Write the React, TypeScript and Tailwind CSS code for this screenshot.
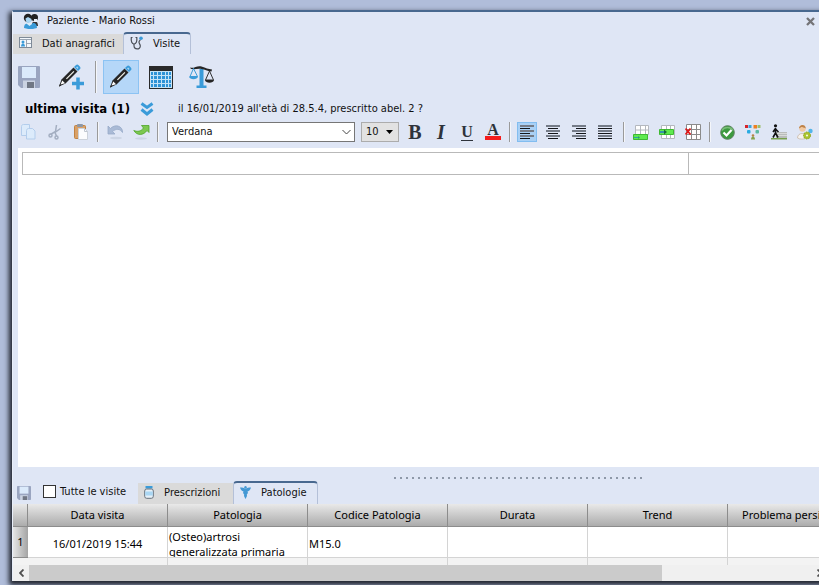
import { ReactNode } from 'react';

const columns = ['Data visita', 'Patologia', 'Codice Patologia', 'Durata', 'Trend', 'Problema persistente'];

const rows = [
  { id: 1, cells: ['16/01/2019 15:44', '(Osteo)artrosi generalizzata primaria', 'M15.0', '', '', ''] },
];

/* ---------- Icons ---------- */

function PatientsIcon() {
  return (
    <svg width="16" height="16" viewBox="0 0 16 16">
      <circle cx="11.5" cy="4.5" r="3.5" fill="#222" />
      <path d="M9 10c4-3 6-1 6 3h-5z" fill="#333" />
      <path d="M11 6h3v3h-3z" fill="#e8eef7" />
      <circle cx="5" cy="5" r="4.2" fill="#222" />
      <path d="M2.5 5.5 5 4l3.5 2-.5 3-3 1-2-1.5z" fill="#a9d6f3" />
      <path d="M1 15c0-4 2-5 4-4l2 1 3-2c3 0 4 2 4 5-4 1.5-9 1.5-13 0z" fill="#3a9bd9" />
      <path d="m4 11 2.5 2L9 11v-1H4z" fill="#dcecf8" />
    </svg>
  );
}

function CardIcon() {
  return (
    <svg width="13" height="12" viewBox="0 0 13 12">
      <rect x=".5" y=".5" width="12" height="10" fill="#f4f8fc" stroke="#7e8a98" />
      <path d="M1 2.5h11M7.5 3v7M8 6.5h4" stroke="#9aa5b2" />
      <circle cx="4" cy="5" r="1.5" fill="#3a9bd9" />
      <path d="M2 9.5c0-4 4-4 4 0z" fill="#3a9bd9" />
    </svg>
  );
}

function StethoscopeIcon() {
  return (
    <svg width="13" height="14" viewBox="0 0 13 14" fill="none">
      <path d="M2.5 1.5H1.3C.8 5.500 2 8 4 8s3.300-2.500 2.800-6.500H5.500" stroke="#4a4f58" strokeWidth="1.2" />
      <path d="M4 8v1.500c0 4.500 6.300 4.500 6.300.5 0-2-1.800-2.500-1.200-4.500L10.500 3.500" stroke="#4a4f58" strokeWidth="1.2" />
      <circle cx="11" cy="2.200" r="1.800" fill="#3a9bd9" />
    </svg>
  );
}

function FloppyIcon({ size }: { size: number }) {
  return (
    <svg width={size} height={size} viewBox="0 0 22 22">
      <path d="M1 0h20a1 1 0 0 1 1 1v20a1 1 0 0 1-1 1H3l-3-3V1a1 1 0 0 1 1-1z" fill="#9aa5c0" />
      <rect x="4" y="1" width="14" height="11" fill="#dbeafb" />
      <rect x="5" y="14.5" width="12" height="7.5" fill="#cbd3e2" />
      <rect x="9" y="16" width="7" height="6" fill="#707784" />
    </svg>
  );
}

function PencilShape() {
  return (
    <>
      <path d="M3.500 15.500 15.500 3.500l4 4-12 12L1 22.500z" fill="#262626" />
      <path d="m2.500 20.500 1.800-4 2.800 2.700z" fill="#fff" />
      <path d="m1 22.500.8-2.200 1.400 1.400z" fill="#262626" />
      <path d="M8 14.500 15.500 7l.8.8-7.500 7.500z" fill="#f6f6ee" />
      <path d="m16 3 1.800-1.800c.9-.9 2-.9 2.800 0l1.200 1.200c.9.900.9 2 0 2.800L20 7z" fill="#3a9bd9" />
      <path d="m18 3.200 1.200-.7 1.200 1.200-.8 1.200z" fill="#a9d6f3" />
    </>
  );
}

function PencilIcon() {
  return (
    <svg width="24" height="24" viewBox="0 0 24 24">
      <PencilShape />
    </svg>
  );
}

function PencilPlusIcon() {
  return (
    <svg width="26" height="26" viewBox="0 0 26 26">
      <PencilShape />
      <path d="M20 13.500v12M14 19.500h12" stroke="#3a9bd9" strokeWidth="3.5" />
    </svg>
  );
}

function CalendarIcon() {
  return (
    <svg width="24" height="23" viewBox="0 0 24 23">
      <path d="M0 0h24v23H0z" fill="#2a2a2a" />
      <path d="M1 5h22v17H1z" fill="#c5e3f7" />
      <path
        d="M2 6h2v3H2zm3 0h3v3H5zm4 0h3v3H9zm4 0h3v3h-3zm4 0h2v3h-2zm3 0h2v3h-2zM2 10h2v3H2zm3 0h3v3H5zm4 0h3v3H9zm4 0h3v3h-3zm4 0h2v3h-2zm3 0h2v3h-2zM2 14h2v3H2zm3 0h3v3H5zm4 0h3v3H9zm4 0h3v3h-3zm4 0h2v3h-2zm3 0h2v3h-2zM2 18h2v3H2zm3 0h3v3H5zm4 0h3v3H9zm4 0h3v3h-3zm4 0h2v3h-2zm3 0h2v3h-2z"
        fill="#2f93d6"
      />
    </svg>
  );
}

function ScalesIcon() {
  return (
    <svg width="25" height="24" viewBox="0 0 25 24" fill="none">
      <path d="M10.500 4h4v16.500h3V23h-10v-2.500h3z" fill="#3a9bd9" />
      <path d="M1 2.500C5 4 8 0 12.500 1.500S19 4 23 4.500l-.5 2C18 6 16 4.500 12.500 4S6 4.500 2 4z" fill="#262626" />
      <path d="M4.500 3.500 1 11.500h7.500z" stroke="#3a9bd9" />
      <path d="M0 11.500h9c-.5 3.500-8.500 3.500-9 0z" fill="#3a9bd9" />
      <path d="M20.500 6 16.500 15h8z" stroke="#333" />
      <path d="M16 15h9c-.5 3.500-8.500 3.500-9 0z" fill="#262626" />
    </svg>
  );
}

function DoubleChevronIcon() {
  return (
    <svg width="14" height="14" viewBox="0 0 14 14" fill="none" stroke="#3a9bd9" strokeWidth="3">
      <path d="m1.500 1.500 5.500 4 5.500-4M1.500 7.500l5.500 4.500 5.500-4.500" />
    </svg>
  );
}

function CopyIcon() {
  return (
    <svg width="16" height="16" viewBox="0 0 16 16" fill="#dcebfb" stroke="#b3cdec">
      <path d="M.5 2.500c0-1 .5-2 2-2h6v11h-8z" />
      <path d="M5.500 6.500c0-1 1-2 2-2h4l2.500 2.500v8h-8.500z" />
    </svg>
  );
}

function CutIcon() {
  return (
    <svg width="14" height="16" viewBox="0 0 14 16" fill="none" stroke="#a3aec1" strokeWidth="1.5">
      <path d="m8.500 1-1 6.500-5 3M12.500 4.500 7 8.500l1.500 3.500" />
      <circle cx="2.500" cy="11.500" r="1.500" />
      <circle cx="8.500" cy="13.500" r="1.500" />
    </svg>
  );
}

function PasteIcon() {
  return (
    <svg width="14" height="16" viewBox="0 0 14 16">
      <rect x=".5" y="1.500" width="11" height="13" rx="1" fill="#d9a066" stroke="#c08242" />
      <rect x="3" y="0" width="6" height="3" rx="1" fill="#8d97a6" />
      <path d="M4.500 4.500h6l3 3v8h-9z" fill="#fbfcfe" stroke="#ccd2db" />
      <path d="M10.500 4.500v3h3" fill="none" stroke="#bfc6d0" />
    </svg>
  );
}

function UndoIcon() {
  return (
    <svg width="17" height="16" viewBox="0 0 17 16">
      <ellipse cx="9" cy="14" rx="6" ry="1.300" fill="#ccd5e5" />
      <path d="M1 2v8h7L5.500 7.500C9 4.500 13 4.500 15.500 8.500 16 2 8-.5 3.500 4.500z" fill="#a9bad6" stroke="#97a9c8" strokeWidth=".8" />
    </svg>
  );
}

function RedoIcon() {
  return (
    <svg width="17" height="16" viewBox="0 0 17 16">
      <ellipse cx="8" cy="14.500" rx="6" ry="1.200" fill="#ccd5e5" />
      <path d="M8.500 1.500H16v7l-2-2C10.500 11.500 4 12 .8 6.500 4.500 8 8 7.500 10.500 4z" fill="#7cc850" stroke="#4fa52b" strokeWidth=".8" />
    </svg>
  );
}

function AlignIcon({ kind }: { kind: 'left' | 'center' | 'right' | 'justify' }) {
  const shortX = { left: 0, center: 2, right: 4, justify: 0 }[kind];
  const shortW = kind === 'justify' ? 14 : 10;
  return (
    <svg width="14" height="14" viewBox="0 0 14 14" shapeRendering="crispEdges">
      {[0, 5, 10].map((y) => (
        <rect key={y} x="0" y={y} width="14" height="2" fill="#757c88" />
      ))}
      {[3, 8, 13].map((y) => (
        <rect key={y} x={shortX} y={y} width={shortW} height="1" fill="#14161a" />
      ))}
    </svg>
  );
}

function InsertRowIcon() {
  return (
    <svg width="16" height="15" viewBox="0 0 16 15">
      <path d="M2.500.5h13v9h-13zM2.500 5h13M7.500.5v9M12.500.5v9" fill="#fff" stroke="#b4b8be" />
      <path d="M.5 9.500h14v5H.5z" fill="#5fea4f" stroke="#3eb932" />
      <path d="M1 12.500h5" stroke="#2f9cae" />
      <path d="m5 11 2 1.500L5 14" fill="#2f9c6e" />
    </svg>
  );
}

function InsertBeforeIcon() {
  return (
    <svg width="16" height="14" viewBox="0 0 16 14">
      <path d="M2.500.5h13v13h-13zM7.500.5v13M11.500.5v13" fill="#fff" stroke="#b4b8be" />
      <path d="M.5 4.500h14v5H.5z" fill="#5fea4f" stroke="#3eb932" />
      <path d="M1 7h5" stroke="#2674c8" strokeWidth="1.5" />
      <path d="M5 4.500 8 7 5 9.500" fill="#176a3a" />
    </svg>
  );
}

function DeleteTableIcon() {
  return (
    <svg width="16" height="16" viewBox="0 0 16 16">
      <path d="M1.500.5h14v15h-14zM1 5.500h14M1 10.500h14M6.500.5v15M11.500.5v15" fill="#fff" stroke="#8b8b8b" />
      <path d="m.5 4.500 5 6M5.500 4.500l-5 6" stroke="#e01818" strokeWidth="1.8" />
    </svg>
  );
}

function CheckIcon() {
  return (
    <svg width="15" height="15" viewBox="0 0 15 15">
      <circle cx="7.500" cy="7.500" r="6.800" fill="#3c9a3f" stroke="#5d8060" />
      <path d="M2 5.500C4 1.500 11 1.500 13 5.500" fill="none" stroke="#79bd78" strokeWidth="1.5" />
      <path d="m3.500 7.500 3 3 5-5.500" fill="none" stroke="#fff" strokeWidth="2.2" />
    </svg>
  );
}

function TreeIcon() {
  return (
    <svg width="16" height="16" viewBox="0 0 16 16">
      <path d="M0 1h3v3H0z" fill="#d8232a" />
      <path d="M3.500 1h3v3h-3z" fill="#3aa7de" />
      <path d="M8.500 1h3.500v3.500H8.500z" fill="#ef8022" />
      <path d="M12.500 1h3v3h-3z" fill="#9dbf6b" />
      <rect x="2" y="6" width="3.500" height="3.500" rx="1" fill="#29abe2" />
      <rect x="10.500" y="6" width="3.500" height="3.500" rx="1" fill="#5bb9a0" />
      <circle cx="8" cy="11.500" r="1.300" fill="#b78245" />
      <path d="M6 15.500c0-4 4-4 4 0z" fill="#86a34a" />
    </svg>
  );
}

function WalkIcon() {
  return (
    <svg width="16" height="16" viewBox="0 0 16 16">
      <path d="M5 8h11v6H5z" fill="#b9bcbb" />
      <path d="M5 9.500h11M5 11.500h11" stroke="#d9dad9" />
      <path d="M0 14h16v1.500H0z" fill="#76a04c" />
      <circle cx="4.500" cy="1.800" r="1.600" fill="#111" />
      <path d="M4.500 4v5L2 13.500M4.500 9 7 13.500M4.500 4.500 2 8M4.500 5 7.500 8" stroke="#111" strokeWidth="1.6" fill="none" />
    </svg>
  );
}

function UserGearIcon() {
  return (
    <svg width="16" height="16" viewBox="0 0 16 16">
      <path d="M.5 14c0-6 9-6 9 0-2 1.500-7 1.500-9 0z" fill="#f5f2ee" stroke="#c9b9a8" strokeWidth=".8" />
      <circle cx="5.500" cy="4.500" r="3.200" fill="#f1c9a1" />
      <path d="M2 4.500C2 0 8.500-.5 8.800 4.500 7 3.500 5 3 4.500 3z" fill="#bd824a" />
      <circle cx="13.500" cy="7" r="2.200" fill="#53b5ea" />
      <circle cx="10" cy="11.500" r="3.500" fill="#a9c22d" stroke="#8da41f" strokeDasharray="1.500 1" />
      <circle cx="10" cy="11.500" r="1.100" fill="#f4f7dc" />
    </svg>
  );
}

function BottleIcon() {
  return (
    <svg width="10" height="13" viewBox="0 0 10 13">
      <rect x="1.500" y="0" width="7" height="2.500" fill="#3a9bd9" />
      <rect x=".7" y="3" width="8.600" height="9.300" rx="2" fill="#e6f0f8" stroke="#66717d" />
      <path d="M1.200 5.500h7.600v4H1.200z" fill="#a9d6f3" />
    </svg>
  );
}

function CaduceusIcon() {
  return (
    <svg width="11" height="13" viewBox="0 0 11 13">
      <path d="M0 1.500c2.500 0 4 .5 5.500 1C7 2 8.500 1.500 11 1.500 10.500 4 9 5 7.500 5.500l.5 1.500L6.800 8.500l.2 1.500-1.500 3L4 10l.2-1.500L3 7l.5-1.500C2 5 .5 4 0 1.500z" fill="#4398d4" />
      <circle cx="5.500" cy="1.200" r="1.200" fill="#4398d4" />
    </svg>
  );
}

/* ---------- Building blocks ---------- */

function Separator() {
  return <span className="h-5 w-0.5 shrink-0 border-l border-[#9a9a9a] bg-[#f4f6fa]" />;
}

function Tab({ label, icon, active }: { label: string; icon: ReactNode; active?: boolean }) {
  return (
    <button
      role="tab"
      aria-selected={!!active}
      className={
        active
          ? 'flex h-full items-center gap-2.5 rounded-t-sm border border-t-2 border-b-0 border-[#b4c0d8] border-t-[#48688f] bg-[#dfe6f5] pl-1.5 pr-2.5 whitespace-nowrap'
          : 'mt-0.5 flex flex-1 items-center gap-2.5 bg-[#dadada] pl-1.5 whitespace-nowrap'
      }
    >
      <span className="-mt-0.5">{icon}</span>
      {label}
    </button>
  );
}

function ToolButton({ label, active, children }: { label: string; active?: boolean; children: ReactNode }) {
  return (
    <button
      aria-label={label}
      className={
        active
          ? 'flex h-5 w-5 shrink-0 items-center justify-center border border-[#82bdf0] bg-[#a9d0f5]'
          : 'flex h-5 w-5 shrink-0 items-center justify-center'
      }
    >
      {children}
    </button>
  );
}

/* ---------- Sections ---------- */

function FormatToolbar() {
  return (
    <div className="flex h-[30px] shrink-0 items-center pb-0.5 pl-1.5">
      <div className="flex gap-1.5">
        <ToolButton label="Copia"><CopyIcon /></ToolButton>
        <ToolButton label="Taglia"><CutIcon /></ToolButton>
        <ToolButton label="Incolla"><PasteIcon /></ToolButton>
      </div>
      <div className="ml-1.5 flex items-center gap-1.5">
        <Separator />
        <ToolButton label="Annulla"><UndoIcon /></ToolButton>
        <ToolButton label="Ripeti"><RedoIcon /></ToolButton>
        <Separator />
      </div>
      <div className="relative ml-2 w-[188px] shrink-0">
        <select aria-label="Carattere" className="block h-5 w-full appearance-none border border-[#767676] bg-white px-1 leading-4">
          <option>Verdana</option>
        </select>
        <svg className="pointer-events-none absolute right-1 top-1.5" width="9" height="8" viewBox="0 0 9 8" fill="none" stroke="#444">
          <path d="m.5 2 4 4 4-4" />
        </svg>
      </div>
      <div className="relative ml-1.5 w-[38px] shrink-0">
        <select aria-label="Dimensione" className="block h-5 w-full appearance-none border border-[#acacac] bg-[#e2e2e2] px-1 leading-4">
          <option>10</option>
        </select>
        <svg className="pointer-events-none absolute right-1.5 top-2" width="7" height="4" viewBox="0 0 7 4">
          <path d="M0 0h7L3.500 4z" fill="#000" />
        </svg>
      </div>
      <div className="ml-1.5 flex gap-1.5 font-['Liberation_Serif',serif] text-xl leading-5 text-[#2e333b]">
        <ToolButton label="Grassetto"><b>B</b></ToolButton>
        <ToolButton label="Corsivo"><b className="italic">I</b></ToolButton>
        <ToolButton label="Sottolineato">
          <b className="border-b border-[#2e333b] text-base leading-4">U</b>
        </ToolButton>
        <ToolButton label="Colore testo">
          <b className="w-4 border-b-4 border-[#f41c1c] text-base leading-3">A</b>
        </ToolButton>
      </div>
      <div className="ml-1.5 flex items-center gap-1.5">
        <Separator />
        <ToolButton label="Allinea a sinistra" active><AlignIcon kind="left" /></ToolButton>
        <ToolButton label="Centra"><AlignIcon kind="center" /></ToolButton>
        <ToolButton label="Allinea a destra"><AlignIcon kind="right" /></ToolButton>
        <ToolButton label="Giustifica"><AlignIcon kind="justify" /></ToolButton>
      </div>
      <div className="ml-2 flex items-center gap-1.5">
        <Separator />
        <ToolButton label="Inserisci riga"><InsertRowIcon /></ToolButton>
        <ToolButton label="Inserisci colonna"><InsertBeforeIcon /></ToolButton>
        <ToolButton label="Elimina tabella"><DeleteTableIcon /></ToolButton>
      </div>
      <div className="ml-1.5 flex items-center gap-1.5">
        <Separator />
        <ToolButton label="Conferma"><CheckIcon /></ToolButton>
        <ToolButton label="Albero"><TreeIcon /></ToolButton>
        <ToolButton label="Percorso"><WalkIcon /></ToolButton>
        <ToolButton label="Impostazioni paziente"><UserGearIcon /></ToolButton>
      </div>
    </div>
  );
}

function VisitsTable() {
  return (
    <div className="h-[61px] shrink-0 overflow-hidden bg-[#f3f3f3] font-['Noto_Sans',sans-serif] text-black">
      <table className="w-[855px] table-fixed border-separate border-spacing-0">
        <colgroup>
          <col className="w-[15px]" />
          {columns.map((c) => (
            <col key={c} className="w-[140px]" />
          ))}
        </colgroup>
        <thead>
          <tr className="h-[23px] bg-linear-to-b from-[#e9e9e9] to-[#a9a9a9]">
            <td className="border-b border-r border-[#8c8c8c]" />
            {columns.map((c) => (
              <th key={c} className="border-b border-r border-[#8c8c8c] p-0 text-center font-normal whitespace-nowrap">
                {c}
              </th>
            ))}
          </tr>
        </thead>
        <tbody>
          {rows.map((r) => (
            <tr key={r.id}>
              <th className="border-b border-[#8c8c8c] bg-linear-to-r from-[#e6e6e6] to-[#a4a4a4] p-0 font-normal">{r.id}</th>
              {r.cells.map((cell, i) => (
                <td key={i} className="border-b border-r border-[#d4d4d4] bg-white p-0">
                  <div className={i === 0 ? 'pt-1 text-center' : 'max-h-[30px] overflow-hidden px-px pt-0.5 leading-[15px]'}>{cell}</div>
                </td>
              ))}
            </tr>
          ))}
          <tr className="h-2">
            <td />
            {columns.map((c) => (
              <td key={c} className="border-r border-[#d4d4d4] p-0" />
            ))}
          </tr>
        </tbody>
      </table>
    </div>
  );
}

function ScrollBar() {
  return (
    <div className="flex h-4 shrink-0 bg-[#f0f0f0]">
      <button aria-label="Scorri a sinistra" className="flex w-4 items-center justify-center">
        <svg width="5" height="8" viewBox="0 0 5 8" fill="none" stroke="#505050" strokeWidth="1.8">
          <path d="M4.500.5 1 4l3.500 3.500" />
        </svg>
      </button>
      <div className="flex-1">
        <div className="h-full w-[81%] bg-[#cbcbcb]" />
      </div>
      <button aria-label="Scorri a destra" className="flex w-4 items-center justify-center">
        <svg width="5" height="8" viewBox="0 0 5 8" fill="none" stroke="#505050" strokeWidth="1.8">
          <path d="M.5.5 4 4 .5 7.500" />
        </svg>
      </button>
    </div>
  );
}

export default function App() {
  return (
    <main className="flex h-screen overflow-hidden bg-[#b0bdda] pb-1 pl-3 pt-2.5 font-['DejaVu_Sans_Condensed','DejaVu_Sans',sans-serif] text-[11px] text-[#111]">
      <section className="-mr-2 flex min-w-0 flex-1 flex-col border-l border-t-2 border-[#e9effa] border-t-[#48688f] bg-[#dfe6f5] shadow-[-2px_3px_5px_1px_#1e222c]">
        <header className="flex h-5 shrink-0 items-center pb-0.5 pl-2.5 pr-2.5">
          <PatientsIcon />
          <h1 className="ml-2">Paziente - Mario Rossi</h1>
          <button aria-label="Chiudi" className="ml-auto p-0.5">
            <svg width="9" height="9" viewBox="0 0 9 9" stroke="#747477" strokeWidth="2.3">
              <path d="m1 1 7 7M8 1 1 8" />
            </svg>
          </button>
        </header>

        <div role="tablist" className="flex h-[22px] shrink-0">
          <div className="flex w-[110px]">
            <Tab label="Dati anagrafici" icon={<CardIcon />} />
          </div>
          <Tab label="Visite" icon={<StethoscopeIcon />} active />
        </div>

        <div className="flex h-[44px] shrink-0 items-center gap-1 pl-0.5 pt-0.5">
          <button aria-label="Salva" className="flex size-7 items-center justify-center"><FloppyIcon size={22} /></button>
          <button aria-label="Nuova visita" className="ml-2 flex size-8 items-center justify-center"><PencilPlusIcon /></button>
          <span className="ml-1 h-8 w-0.5 border-l border-[#9a9a9a] bg-[#f4f6fa]" />
          <button aria-label="Modifica" className="ml-0.5 flex h-[34px] w-9 items-center justify-center border border-[#8cc3f3] bg-[#b5d7f8]">
            <PencilIcon />
          </button>
          <button aria-label="Calendario" className="flex size-9 items-center justify-center"><CalendarIcon /></button>
          <button aria-label="Bilancia" className="flex size-9 items-center justify-center"><ScalesIcon /></button>
        </div>

        <div className="flex h-5 shrink-0 items-center pl-3 pt-0.5">
          <h2 className="text-[13px] font-bold text-black">ultima visita (1)</h2>
          <button aria-label="Espandi" className="ml-2.5"><DoubleChevronIcon /></button>
          <p className="ml-6">il 16/01/2019 all'età di 28.5.4, prescritto abel. 2 ?</p>
        </div>

        <FormatToolbar />

        <div className="ml-[5px] min-h-0 flex-1 bg-white pl-1 pt-1">
          <table className="w-full table-fixed border-collapse">
            <tbody>
              <tr className="h-[22px]">
                <td className="w-[666px] border border-[#b9b9b9]" />
                <td className="border border-[#b9b9b9]" />
              </tr>
            </tbody>
          </table>
        </div>

        <div className="flex h-[13px] shrink-0 items-end pl-[381px]">
          <div className="flex gap-1 pb-px">
            {Array.from({ length: 42 }, (_, i) => (
              <span key={i} className="size-0.5 bg-[#8e98a8]" />
            ))}
          </div>
        </div>

        <div className="flex h-6 shrink-0 items-end pl-1">
          <button aria-label="Salva elenco" className="mb-1"><FloppyIcon size={14} /></button>
          <label className="ml-3 mb-1 flex items-center gap-1">
            <input type="checkbox" className="size-[13px] appearance-none border border-[#333] bg-white" />
            Tutte le visite
          </label>
          <div role="tablist" className="ml-3 flex h-[23px]">
            <div className="flex w-[95px]">
              <Tab label="Prescrizioni" icon={<BottleIcon />} />
            </div>
            <Tab label="Patologie" icon={<CaduceusIcon />} active />
          </div>
        </div>

        <VisitsTable />
        <ScrollBar />
      </section>
    </main>
  );
}
